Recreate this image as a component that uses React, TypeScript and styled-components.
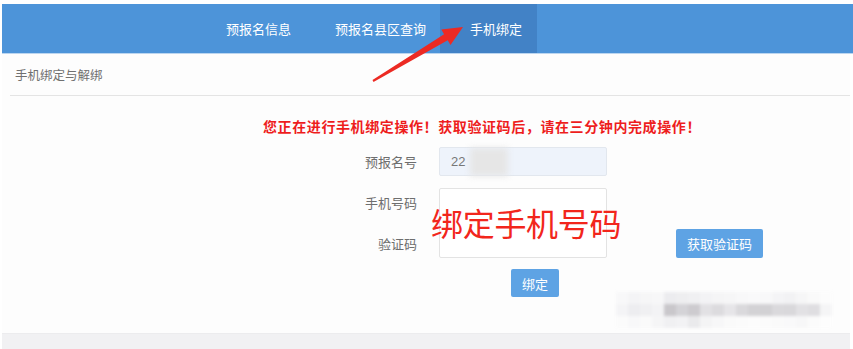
import React from 'react';
import styled, { createGlobalStyle } from 'styled-components';

const GlobalStyle = createGlobalStyle`
  html, body {
    margin: 0;
    padding: 0;
    background: #ffffff;
  }
  body {
    font-family: "Noto Sans CJK SC", "Noto Sans", sans-serif;
  }
`;

const Page = styled.div`
  position: relative;
  width: 853px;
  height: 349px;
  padding: 4px 0 0 2px;
  box-sizing: border-box;
  overflow: hidden;
`;

const NavBar = styled.nav`
  display: flex;
  height: 49px;
  padding-left: 202px;
  background: #4d94d9;
  border-bottom: 1px solid #bcd6f0;
`;

const NavItem = styled.div<{ $active?: boolean }>`
  display: flex;
  align-items: center;
  padding: ${(p) => (p.$active ? '0 15px 0 30px' : '0 22px')};
  margin-left: ${(p) => (p.$active ? '-8px' : '0')};
  font-size: 13px;
  color: #ffffff;
  background: ${(p) => (p.$active ? '#4282c6' : 'transparent')};
`;

const Panel = styled.div`
  position: relative;
  display: flex;
  flex-direction: column;
  height: 279px;
  margin-right: 3px;
  background: #fdfdfd;
`;

const SectionTitle = styled.div`
  margin: 0 0 0 8px;
  padding: 0 0 0 5px;
  height: 41px;
  display: flex;
  align-items: center;
  font-size: 12.5px;
  color: #707070;
  border-bottom: 1px solid #e4e4e4;
`;

const Warning = styled.div`
  margin: 20px 0 0 261px;
  font-size: 14px;
  line-height: 20px;
  letter-spacing: 0.6px;
  font-weight: 700;
  color: #ee1d1d;
`;

const Form = styled.div`
  display: grid;
  grid-template-columns: 100px 168px 87px;
  grid-template-rows: 29px 29px 29px;
  column-gap: 22px;
  row-gap: 12px;
  margin: 11px 0 0 315px;
`;

const Label = styled.div<{ $row: number }>`
  grid-column: 1;
  grid-row: ${(p) => p.$row};
  display: flex;
  align-items: center;
  justify-content: flex-end;
  font-size: 13px;
  color: #6e6e6e;
`;

const ReadonlyInput = styled.div`
  position: relative;
  grid-column: 2;
  grid-row: 1;
  display: flex;
  align-items: center;
  padding-left: 11px;
  box-sizing: border-box;
  font-family: "Liberation Sans", Arial, sans-serif;
  font-size: 13px;
  color: #777;
  background: #eef3fb;
  border: 1px solid #e2e7ee;
  border-radius: 2px;
`;

const Redact = styled.div`
  position: absolute;
  left: 30px;
  top: 0;
  width: 38px;
  height: 28px;
  background: #e6e6e6;
  filter: blur(3px);
`;

const TallBox = styled.div`
  grid-column: 2;
  grid-row: 2 / span 2;
  background: #ffffff;
  border: 1px solid #e3e3e3;
  border-radius: 2px;
`;

const Button = styled.button`
  display: flex;
  align-items: center;
  justify-content: center;
  height: 29px;
  padding: 0;
  border: none;
  border-radius: 2px;
  background: #5ea3e4;
  color: #ffffff;
  font-family: "Noto Sans CJK SC", sans-serif;
  font-size: 13px;
`;

const CodeButton = styled(Button)`
  grid-column: 3;
  grid-row: 3;
  margin-left: 47px;
  width: 87px;
`;

const BindButton = styled(Button)`
  margin: 11px 0 0 509px;
  width: 48px;
  height: 28px;
`;

const Footer = styled.div`
  height: 16px;
  margin-right: 3px;
  background: #f1f1f3;
  border-top: 1px solid #ececee;
`;

const Overlay = styled.div`
  position: absolute;
  left: 431px;
  top: 200px;
  font-size: 32px;
  line-height: 44px;
  color: #f2261c;
  letter-spacing: -0.3px;
`;

const Watermark = styled.div`
  position: absolute;
  left: 616px;
  top: 292px;
  display: grid;
  grid-template-columns: repeat(18, 12px);
  grid-template-rows: repeat(3, 12px);
  filter: blur(1.5px);
`;

const Pixel = styled.div<{ $shade: string }>`
  background: ${(p) => p.$shade};
`;

const Arrow = styled.svg`
  position: absolute;
  left: 0;
  top: 0;
  pointer-events: none;
`;

const pixelRows = [
  ['#f8f8f9', '#f4f4f6', '#f6f6f7', '#f7f7f8', '#ececef', '#eeeef0', '#f0f0f2', '#f3f3f5', '#f5f5f6', '#f6f6f7', '#f8f8f9', '#f9f9fa', '#f8f8f9', '#f4f4f6', '#f2f2f4', '#f6f6f7', '#fafafa', '#fcfcfc'],
  ['#f4f4f6', '#ededf0', '#f0f0f2', '#f3f3f5', '#c9c7cb', '#d4d3d7', '#cdcbcf', '#e2e1e4', '#dcdbde', '#e6e5e8', '#dad9dc', '#d3d2d5', '#d2d1d4', '#dad9dc', '#d9d8db', '#e2e1e4', '#dfdee1', '#f5f5f6'],
  ['#fbfbfb', '#f8f8f9', '#fafafa', '#f5f5f6', '#f0f0f2', '#f2f2f4', '#eaeaec', '#f4f4f5', '#f7f7f8', '#fafafa', '#fbfbfb', '#fcfcfc', '#fbfbfb', '#fafafa', '#f9f9fa', '#f7f7f8', '#fbfbfb', '#fdfdfd'],
];

export default function App() {
  return (
    <>
      <GlobalStyle />
      <Page>
        <NavBar>
          <NavItem>预报名信息</NavItem>
          <NavItem>预报名县区查询</NavItem>
          <NavItem $active>手机绑定</NavItem>
        </NavBar>
        <Panel>
          <SectionTitle>手机绑定与解绑</SectionTitle>
          <Warning>您正在进行手机绑定操作！获取验证码后，请在三分钟内完成操作！</Warning>
          <Form>
            <Label $row={1}>预报名号</Label>
            <ReadonlyInput>
              22
              <Redact />
            </ReadonlyInput>
            <Label $row={2}>手机号码</Label>
            <Label $row={3}>验证码</Label>
            <TallBox />
            <CodeButton>获取验证码</CodeButton>
          </Form>
          <BindButton>绑定</BindButton>
        </Panel>
        <Footer />
        <Overlay>绑定手机号码</Overlay>
        <Watermark>
          {pixelRows.flat().map((shade, i) => (
            <Pixel key={i} $shade={shade} />
          ))}
        </Watermark>
        <Arrow width="853" height="349" viewBox="0 0 853 349">
          <polygon
            points="373.5,81.9 447.7,40.3 450.5,45 463,27 441.3,29.6 444.1,34.3 372.5,80.1"
            fill="#ec2a23"
          />
        </Arrow>
      </Page>
    </>
  );
}
